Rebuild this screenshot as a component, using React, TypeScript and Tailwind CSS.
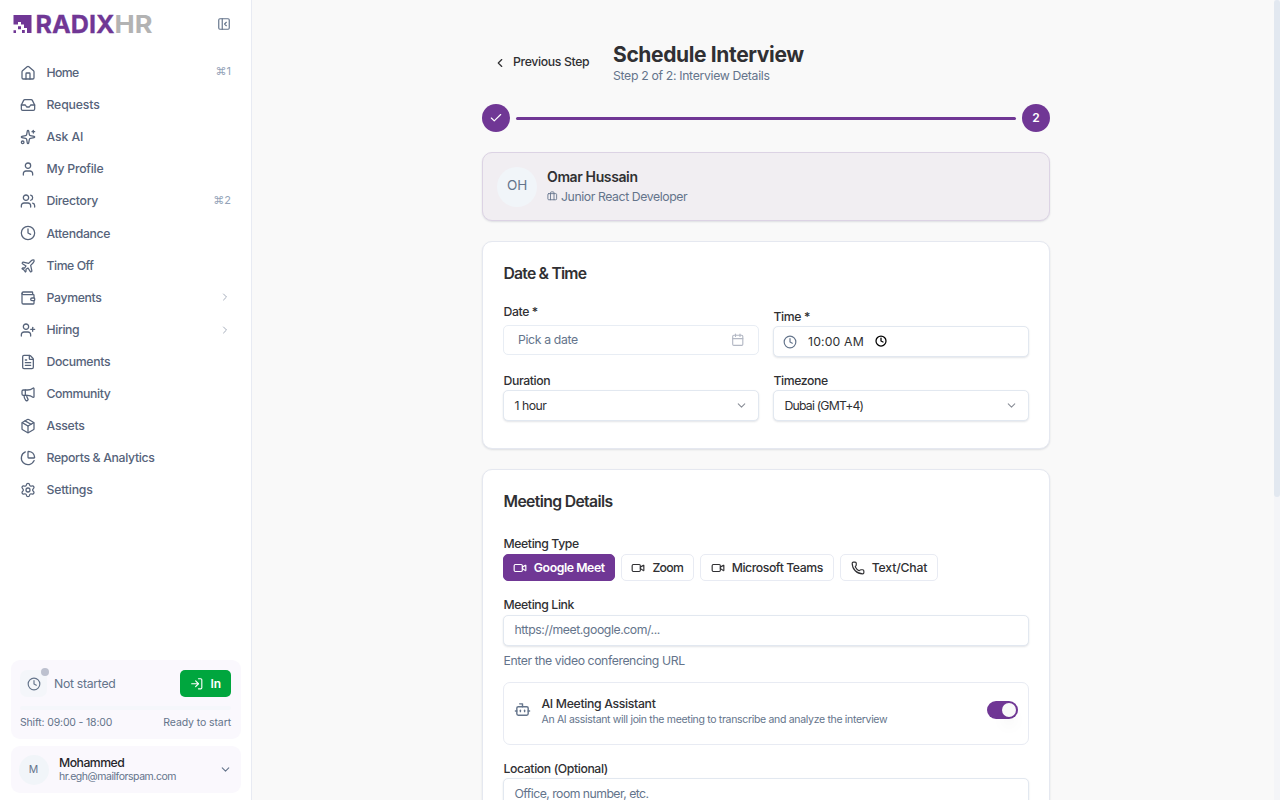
import React from "react";
import {
  House, Inbox, Sparkles, User, Users, Clock, Plane, Wallet, UserPlus, FileText, Megaphone, Package,
  ChartPie, Settings, ChevronRight, ChevronLeft, ChevronDown, PanelLeftClose, LogIn, Check, Briefcase,
  Calendar, Video, Phone, Bot, type LucideIcon,
} from "lucide-react";

type NavItem = { label: string; icon: LucideIcon; track: string; hint?: string; more?: boolean };

const nav: NavItem[] = [
  { label: "Home", icon: House, track: "tracking-[-0.6px]", hint: "⌘1" },
  { label: "Requests", icon: Inbox, track: "tracking-[-0.15px]" },
  { label: "Ask AI", icon: Sparkles, track: "tracking-[-0.1px]" },
  { label: "My Profile", icon: User, track: "tracking-[-0.25px]" },
  { label: "Directory", icon: Users, track: "tracking-[-0.28px]", hint: "⌘2" },
  { label: "Attendance", icon: Clock, track: "tracking-[-0.33px]" },
  { label: "Time Off", icon: Plane, track: "tracking-[-0.45px]" },
  { label: "Payments", icon: Wallet, track: "tracking-[-0.33px]", more: true },
  { label: "Hiring", icon: UserPlus, track: "tracking-[-0.4px]", more: true },
  { label: "Documents", icon: FileText, track: "tracking-[-0.35px]" },
  { label: "Community", icon: Megaphone, track: "tracking-[-0.38px]" },
  { label: "Assets", icon: Package, track: "tracking-[-0.25px]" },
  { label: "Reports & Analytics", icon: ChartPie, track: "tracking-[-0.34px]" },
  { label: "Settings", icon: Settings, track: "tracking-[-0.2px]" },
];

function Logo() {
  return (
    <svg width="142" height="36" viewBox="0 -8 142 36" aria-label="RadixHR">
      <path
        fill="#703795"
        d="M0.500 1h18v18h-4.500v-5h-3V10.500H8V8H5v2.500H0.500zM0.500 16.300h2.500V19H0.500zM5 12.300h3v3H5zM9 16h2.800v3H9z"
      />
      <text x="22.500" y="18.700" fontSize="24.500" fontWeight="700" fill="#703795" stroke="#703795" strokeWidth="0.300" textLength="79" lengthAdjust="spacingAndGlyphs">RADIX</text>
      <text x="101.500" y="18.700" fontSize="24.500" fontWeight="700" fill="#b3b3b3" textLength="38" lengthAdjust="spacingAndGlyphs">HR</text>
    </svg>
  );
}

function Sidebar() {
  return (
    <aside className="flex h-full w-[252px] shrink-0 flex-col border-r border-[#e8ebf3] bg-white">
      <div className="flex h-[47px] items-center justify-between pl-[13px] pr-[20px]">
        <Logo />
        <PanelLeftClose size={14} strokeWidth={2} className="text-[#64748b]" />
      </div>
      <nav className="flex flex-col pt-[10.100px] pl-[20px] pr-[20px]">
        {nav.map(({ label, icon: Icon, track, hint, more }) => (
          <div key={label} className="flex h-[32.11px] items-center text-[12.25px] font-medium text-[#56637a]">
            <Icon size={16} strokeWidth={1.900} className="mb-[0.500px] shrink-0" />
            <span className={`ml-[10.500px] flex-1 ${track}`}>{label}</span>
            {hint && <span className="pb-[3px] text-[11px] font-normal text-[#94a3b8]">{hint}</span>}
            {more && <ChevronRight size={12} className="mb-px text-[#a5adbb]" />}
          </div>
        ))}
      </nav>
      <div className="mt-auto flex flex-col gap-[7px] px-[10.500px] pb-[7px]">
        <div className="h-[79px] rounded-[9px] bg-[#faf8fd] px-[9.500px] pt-[10px]">
          <div className="flex h-[27px] items-center">
            <div className="relative flex size-[27px] items-center justify-center rounded-[7px] bg-[#f4f6fa]">
              <Clock size={14} className="text-[#64748b]" />
              <span className="absolute -right-[2px] -top-[2px] size-[8px] rounded-full bg-[#bdc1cf]" />
            </div>
            <span className="ml-[7px] flex-1 pt-px text-[12.25px] tracking-[-0.3px] text-[#64748b]">Not started</span>
            <button className="flex h-[27px] w-[51px] items-center justify-center gap-[7px] rounded-[5px] bg-[#00a63e] text-[12px] font-semibold text-white">
              <LogIn size={13.500} />
              In
            </button>
          </div>
          <div className="mt-[9px] h-[4px] rounded bg-[#f5f7fb]" />
          <div className="mt-[5px] flex justify-between text-[10.5px] leading-[15px] text-[#64748b]">
            <span className="tracking-[-0.17px]">Shift: 09:00 - 18:00</span>
            <span className="tracking-[-0.1px]">Ready to start</span>
          </div>
        </div>
        <div className="flex h-[47px] items-center rounded-[9px] bg-[#faf8fd] pl-[8px] pr-[9px]">
          <div className="flex size-[30px] items-center justify-center rounded-full bg-[#f1f5f9] text-[10.5px] text-[#64748b]">M</div>
          <div className="ml-[10.500px] flex-1">
            <div className="text-[12.25px] font-medium leading-[15px] tracking-[-0.52px] text-[#26262b]">Mohammed</div>
            <div className="text-[10.5px] leading-[14px] tracking-[-0.46px] text-[#64748b]">hr.egh@mailforspam.com</div>
          </div>
          <ChevronDown size={13} className="text-[#64748b]" />
        </div>
      </div>
    </aside>
  );
}

const field = "flex h-[31px] items-center rounded-[5px] border border-[#e2e8f0] bg-white shadow-[0_1px_2px_rgba(20,30,60,0.12)]";
const card = "rounded-[10px] border border-[#e5e8f0] bg-white px-[20px] shadow-[0_1px_2px_rgba(20,30,60,0.12)]";
const label = "pl-[0.500px] text-[12.25px] font-medium leading-[14px] tracking-[-0.4px] text-[#303033]";

const meetings: { name: string; icon: LucideIcon; cls: string }[] = [
  { name: "Google Meet", icon: Video, cls: "w-[111.5px] bg-[#703795] border-[#703795] text-white font-semibold tracking-[-0.42px]" },
  { name: "Zoom", icon: Video, cls: "w-[72.5px] border-[#e8ebf3] text-[#303033] font-medium tracking-[-0.7px]" },
  { name: "Microsoft Teams", icon: Video, cls: "w-[133.5px] border-[#e8ebf3] text-[#303033] font-medium tracking-[-0.43px]" },
  { name: "Text/Chat", icon: Phone, cls: "w-[98px] border-[#e8ebf3] text-[#303033] font-medium tracking-[-0.17px]" },
];

function SelectField({ name, value, track }: { name: string; value: string; track: string }) {
  return (
    <div>
      <div className={label}>{name}</div>
      <div className={`${field} mt-[2px] justify-between px-[10.500px] text-[12.25px] text-[#303033]`}>
        <span className={`pt-px ${track}`}>{value}</span>
        <ChevronDown size={13} className="text-[#8b8f98]" />
      </div>
    </div>
  );
}

export default function App() {
  return (
    <div className="flex h-[800px] w-[1280px] overflow-hidden bg-[#f9f9f9] font-['Inter','Noto_Sans',sans-serif]">
      <Sidebar />
      <main className="flex flex-1 justify-center overflow-hidden pl-[6px]">
        <div className="w-[568px] shrink-0 pt-[42px]">
          <header className="flex h-[43px]">
            <div className="flex w-[131px] items-center pb-[2px] pl-[11px] text-[12.25px] font-medium text-[#303033]">
              <ChevronLeft size={14} />
              <span className="ml-[6px] whitespace-nowrap tracking-[-0.35px]">Previous Step</span>
            </div>
            <div>
              <h1 className="text-[21px] font-bold leading-[25px] tracking-[-0.37px] text-[#303033]">Schedule Interview</h1>
              <p className="text-[12.25px] leading-[18px] tracking-[-0.33px] text-[#64748b]">Step 2 of 2: Interview Details</p>
            </div>
          </header>
          <div className="mt-[19px] flex h-[28px] items-center gap-[6px]">
            <div className="flex size-[28px] items-center justify-center rounded-full bg-[#703795] text-white"><Check size={14} /></div>
            <div className="h-[3px] flex-1 rounded-full bg-[#703795]" />
            <div className="flex size-[28px] items-center justify-center rounded-full bg-[#703795] text-[12px] font-semibold text-white">2</div>
          </div>
          <section className="mt-[20px] flex h-[69px] items-center rounded-[10px] border border-[#dcd3e4] bg-[#f1eef2] px-[14px] shadow-[0_1px_2px_rgba(20,30,60,0.12)]">
            <div className="flex size-[40px] items-center justify-center rounded-full bg-[#f1f5f9] pb-[2px] text-[13.5px] tracking-[-0.3px] text-[#64748b]">OH</div>
            <div className="ml-[10px]">
              <div className="text-[14px] font-semibold leading-[18px] tracking-[-0.38px] text-[#303033]">Omar Hussain</div>
              <div className="mt-[2px] flex items-center text-[12.25px] leading-[18px] tracking-[-0.41px] text-[#64748b]">
                <Briefcase size={10.500} className="mb-px mr-[3.500px]" />
                Junior React Developer
              </div>
            </div>
          </section>

          <section className={`${card} mt-[20px] h-[208px] pt-[22px]`}>
            <h2 className="pl-[0.500px] text-[15.75px] font-semibold leading-[20px] tracking-[-0.8px] text-[#303033]">Date &amp; Time</h2>
            <div className="mt-[21px] grid grid-cols-2 gap-x-[14px]">
              <div className="h-[69px]">
                <div className={label}>Date *</div>
                <div className="mt-[6px] flex h-[30px] items-center justify-between rounded-[5px] border border-[#e8edf4] px-[14px] text-[12.25px] tracking-[-0.36px] text-[#64748b]">
                  Pick a date
                  <Calendar size={13.500} className="text-[#b3b8c4]" />
                </div>
              </div>
              <div className="h-[69px] pt-[5px]">
                <div className={label}>Time *</div>
                <div className={`${field} mt-[2px] px-[9px] text-[12.25px] text-[#303033]`}>
                  <Clock size={14} className="text-[#64748b]" />
                  <span className="ml-[11px] pt-px tracking-[0.15px]">10:00 AM</span>
                  <Clock size={12} strokeWidth={2.500} className="mb-px ml-[11.500px] text-black" />
                </div>
              </div>
              <SelectField name="Duration" value="1 hour" track="tracking-[-0.5px]" />
              <SelectField name="Timezone" value="Dubai (GMT+4)" track="tracking-[-0.8px]" />
            </div>
          </section>

          <section className={`${card} mt-[20px] h-[500px] pt-[22px]`}>
            <h2 className="pl-[0.500px] text-[15.75px] font-semibold leading-[20px] tracking-[-0.64px] text-[#303033]">Meeting Details</h2>
            <div className={`${label} mt-[25px]`}>Meeting Type</div>
            <div className="mt-[3px] flex gap-[6.500px]">
              {meetings.map(({ name, icon: Icon, cls }) => (
                <button key={name} className={`flex h-[27px] items-center justify-center gap-[7px] whitespace-nowrap rounded-[5px] border text-[12.25px] ${cls}`}>
                  <Icon size={14} className="shrink-0" />
                  <span className="pt-px">{name}</span>
                </button>
              ))}
            </div>
            <div className={`${label} mt-[17px]`}>Meeting Link</div>
            <div className={`${field} mt-[3px] px-[10.500px] text-[12.25px] tracking-[-0.42px] text-[#64748b]`}>https://meet.google.com/...</div>
            <p className="mt-[6px] pl-[0.500px] text-[12.25px] leading-[18px] tracking-[-0.42px] text-[#64748b]">Enter the video conferencing URL</p>
            <div className="mt-[12px] flex h-[63px] rounded-[7px] border border-[#e8ebf3] pl-[10px] pr-[10px]">
              <Bot size={17} className="mt-[18px] shrink-0 text-[#64748b]" />
              <div className="ml-[10.500px] flex-1 pt-[14px]">
                <div className="text-[12.25px] font-medium leading-[14px] tracking-[-0.33px] text-[#303033]">AI Meeting Assistant</div>
                <div className="mt-px text-[10.5px] leading-[15px] tracking-[-0.32px] text-[#64748b]">An AI assistant will join the meeting to transcribe and analyze the interview</div>
              </div>
              <div className="mt-[18px] flex h-[18px] w-[31px] items-center justify-end rounded-full bg-[#703795] p-[2px]">
                <div className="size-[14px] rounded-full bg-[#f9f9f9] shadow-lg" />
              </div>
            </div>
            <div className={`${label} mt-[17px]`}>Location (Optional)</div>
            <div className={`${field} mt-[2px] px-[10.500px] text-[12.25px] tracking-[-0.54px] text-[#64748b]`}>
              <span className="pt-px">Office, room number, etc.</span>
            </div>
          </section>
        </div>
      </main>
      <div className="w-[6px] shrink-0 bg-[#f4f5f8]">
        <div className="h-[497px] rounded-full bg-[#e2e8f0]" />
      </div>
    </div>
  );
}
